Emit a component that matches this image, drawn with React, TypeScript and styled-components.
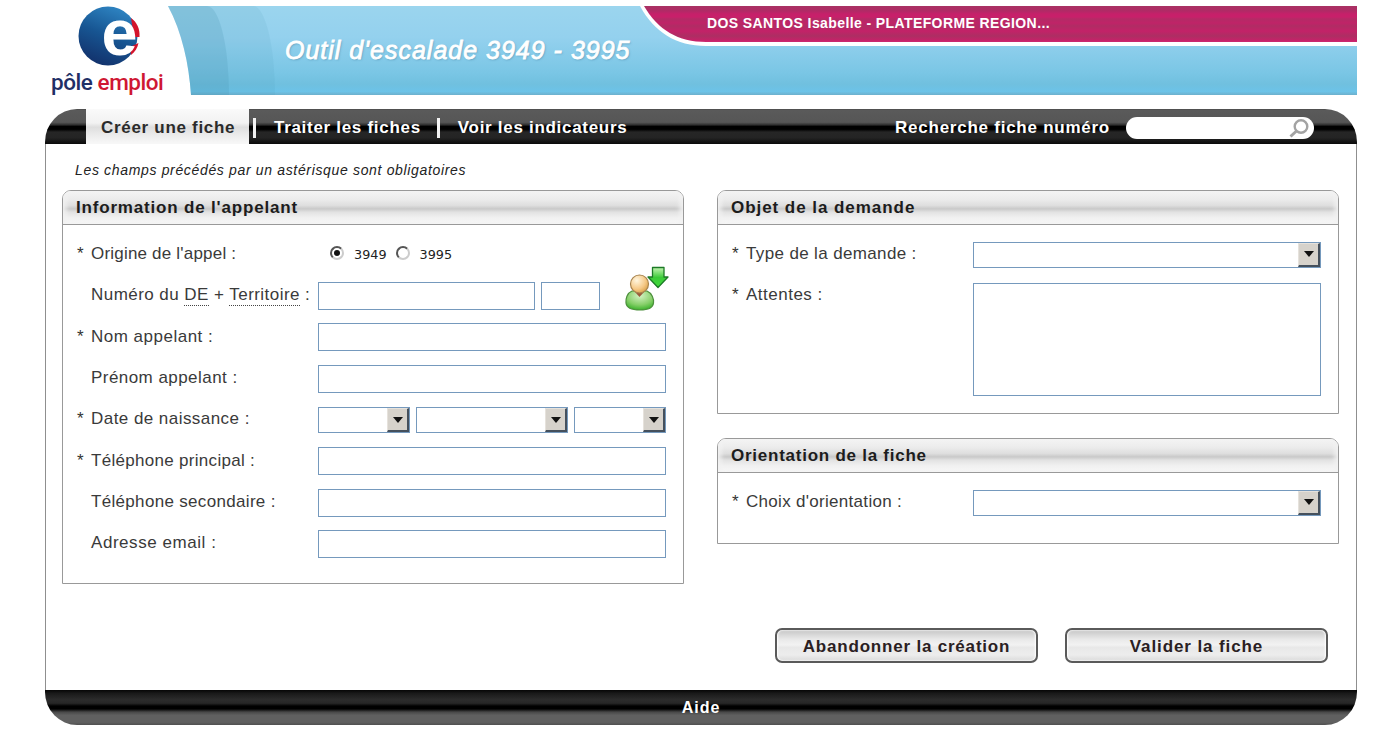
import React from 'react';
import styled, { createGlobalStyle } from 'styled-components';

const GlobalStyle = createGlobalStyle`
  *, *::before, *::after { box-sizing: border-box; }
  body {
    margin: 0;
    background: #fff;
    color: #333;
    font-family: 'Liberation Sans', Arial, sans-serif;
    font-size: 17px;
  }
`;

const Page = styled.div`
  width: 1393px;
  height: 754px;
  padding: 6px 36px 0 45px;
  display: flex;
  flex-direction: column;
  overflow: hidden;
`;

const Text = styled.span<{ $ls?: number }>`
  white-space: nowrap;
  letter-spacing: ${(p) => p.$ls ?? 0}px;
`;

/* ---------- Header ---------- */

const Header = styled.header`
  display: flex;
  height: 103px;
  flex: none;
`;

const Brand = styled.div`
  width: 123px;
  padding-left: 6px;
  flex: none;
`;

const BrandMark = styled.svg`
  display: block;
  width: 66px;
  height: 60px;
  margin-left: 26px;
  overflow: visible;
`;

const BrandName = styled.div`
  font-family: Roboto, sans-serif;
  font-size: 22.5px;
  font-weight: 500;
  line-height: 28px;
  margin-top: 2px;
  letter-spacing: -0.45px;
  white-space: nowrap;
  color: #1f2f66;
  em { font-style: normal; color: #cf1733; }
`;

const Banner = styled.div`
  position: relative;
  display: flex;
  flex: 1;
  height: 89px;
  justify-content: space-between;
  background: linear-gradient(#9bd5ee 0%, #94d1ee 35%, #7ac6e5 75%, #70c0df 88%, #6cc3e8 96%, #6db0cc 100%);
  clip-path: path('M0 0 C14 26 21 58 23 89 H1189 V0 Z');
`;

const BannerShade = styled.div<{ $right: number; $alpha: number }>`
  position: absolute;
  left: 0;
  top: 0;
  width: ${(p) => p.$right}px;
  height: 89px;
  border-top-right-radius: 22px 89px;
  background: rgba(70, 145, 175, ${(p) => p.$alpha});
`;

const AppTitle = styled.h1`
  position: relative;
  margin: 29px 0 0 117px;
  font-size: 25px;
  line-height: 30px;
  font-weight: 400;
  font-style: italic;
  letter-spacing: 1px;
  color: #fff;
  -webkit-text-stroke: 0.8px #fff;
  text-shadow: 1px 1px 2px rgba(70, 130, 160, 0.6);
  white-space: nowrap;
`;

const UserEdge = styled.div`
  width: 717px;
  height: 40px;
  padding-left: 4px;
  background: #fff;
  clip-path: path('M0 0 C14 26 36 40 66 40 H717 V0 Z');
`;

const UserBar = styled.div`
  height: 36px;
  padding-left: 63px;
  line-height: 35px;
  font-size: 14px;
  font-weight: 700;
  color: #fff;
  background: linear-gradient(#a83263 0, #b12a66 5px, #c6206a 8px, #c8206a 11px, #b32b66 13px, #c02368 17px, #b02c64 20px, #c32268 25px, #ad2e63 30px, #c42268 34px, #cc2a70 36px);
  clip-path: path('M0 0 C14 24 34 36 62 36 H713 V0 Z');
`;

/* ---------- Menu ---------- */

const MenuBar = styled.nav`
  display: flex;
  align-items: center;
  height: 35px;
  flex: none;
  padding-left: 41px;
  border-radius: 32px 32px 0 0 / 33px 33px 0 0;
  background: linear-gradient(#4a4a4a 0, #5a5a5a 4%, #565656 38%, #303030 45%, #000 50%, #000 58%, #262626 66%, #242424 82%, #0a0a0a 100%);
  color: #fff;
  font-weight: 700;
`;

const ActiveTab = styled.div`
  width: 163px;
  height: 35px;
  padding-left: 15px;
  line-height: 37px;
  color: #2b2b2b;
  background: linear-gradient(#fafafa 0, #f2f2f2 40%, #dedede 52%, #ececec 75%, #f8f8f8 100%);
`;

const Divider = styled.i<{ $left: number; $right: number }>`
  width: 3px;
  height: 20px;
  margin: 2px ${(p) => p.$right}px 0 ${(p) => p.$left}px;
  background: #f2f2f2;
`;

const MenuLink = styled.div`
  line-height: 35px;
  padding-top: 2px;
`;

const SearchLabel = styled(MenuLink)`
  margin-left: auto;
  margin-right: 16px;
`;

const SearchBox = styled.div`
  display: flex;
  justify-content: flex-end;
  align-items: center;
  width: 188px;
  height: 22px;
  margin-right: 43px;
  margin-top: 3px;
  padding-right: 4px;
  border-radius: 11px;
  background: #fff;
  svg { display: block; }
`;

/* ---------- Body ---------- */

const Body = styled.main`
  height: 546px;
  flex: none;
  padding: 0 17px 0 16px;
  border-left: 1px solid #8f8f8f;
  border-right: 1px solid #8f8f8f;
`;

const Hint = styled.p`
  margin: 0;
  height: 46px;
  padding: 16px 0 0 13px;
  font-size: 14px;
  line-height: 20px;
  font-style: italic;
  color: #222;
`;

const Columns = styled.div`
  display: flex;
  justify-content: space-between;
  height: 394px;
`;

const Column = styled.div`
  width: 622px;
`;

const Panel = styled.section<{ $h: number; $mt?: number }>`
  height: ${(p) => p.$h}px;
  margin-top: ${(p) => p.$mt ?? 0}px;
  border: 1px solid #999;
  border-radius: 9px 9px 0 0;
  overflow: hidden;
`;

const PanelTitle = styled.h2`
  margin: 0;
  height: 34px;
  padding-left: 13px;
  line-height: 34px;
  font-size: 17px;
  font-weight: 700;
  color: #1c1c1c;
  border-bottom: 1px solid #999;
  background: linear-gradient(#f4f4f4 0, #ececec 25%, #dedede 44%, #c9c9c9 54%, #e2e2e2 64%, #f0f0f0 80%, #f7f7f7 100%);
  box-shadow: inset 5px 0 5px -2px #f2f2f2, inset -5px 0 5px -2px #f2f2f2;
`;

const Rows = styled.div`
  padding: 8px 17px 0 14px;
`;

const Row = styled.div<{ $h?: number }>`
  display: flex;
  height: ${(p) => p.$h ?? 41.35}px;
`;

const Star = styled.span`
  width: 14px;
  flex: none;
  line-height: 42px;
  color: #333;
`;

const Label = styled.label`
  width: 227px;
  flex: none;
  line-height: 41px;
  color: #3a3a3a;
  abbr {
    text-decoration: none;
    border-bottom: 1px dotted #444;
    padding-bottom: 1px;
  }
`;

const Fields = styled.div<{ $gap?: number }>`
  display: flex;
  flex: 1;
  align-items: center;
  gap: ${(p) => p.$gap ?? 0}px;
  padding-top: 2px;
`;

const Input = styled.input<{ $w: number }>`
  width: ${(p) => p.$w}px;
  flex: none;
  height: 28px;
  margin: 0;
  padding: 0 4px;
  border: 1px solid #7599bd;
  border-radius: 0;
  outline: none;
  background: #fff;
`;

const Area = styled.textarea`
  width: 348px;
  height: 113px;
  margin-top: 4px;
  border: 1px solid #7599bd;
  outline: none;
  resize: none;
`;

const SelectBox = styled.div<{ $w: number }>`
  display: flex;
  justify-content: flex-end;
  width: ${(p) => p.$w}px;
  height: 26px;
  border: 1px solid #7599bd;
  background: #fff;
`;

const SelectArrow = styled.span`
  display: flex;
  align-items: center;
  justify-content: center;
  width: 22px;
  height: 24px;
  border: solid;
  border-width: 1px 2px 2px 1px;
  border-color: #e6e2dc #45505c #45505c #e6e2dc;
  background: #d6d2cb;
  &::after {
    content: '';
    border: 5px solid transparent;
    border-top: 6px solid #111;
    border-bottom: 0;
  }
`;

const Choice = styled.span`
  display: flex;
  align-items: center;
  font-family: 'DejaVu Sans', sans-serif;
  font-size: 12.8px;
  color: #222;
`;

const ChoiceGroup = styled.div`
  display: flex;
  gap: 9px;
  padding-left: 12px;
`;

const RadioDot = styled.i<{ $on?: boolean }>`
  display: flex;
  align-items: center;
  justify-content: center;
  width: 14px;
  height: 14px;
  margin-right: 10px;
  margin-top: -3px;
  border: 2px solid;
  border-color: #555 #ccc #ccc #555;
  border-radius: 50%;
  background: #fff;
  &::after {
    content: '';
    width: 6px;
    height: 6px;
    border-radius: 50%;
    background: ${(p) => (p.$on ? '#111' : 'transparent')};
  }
`;

const PersonIcon = styled.svg`
  display: block;
  flex: none;
  width: 46px;
  height: 46px;
  margin: -16px 0 0 16px;
  overflow: visible;
`;

const Actions = styled.div`
  display: flex;
  justify-content: flex-end;
  gap: 27px;
  padding: 44px 11px 0 0;
`;

const Button = styled.button`
  width: 263px;
  height: 35px;
  padding: 2px 0 0;
  border: 2px solid #5a5a5a;
  border-radius: 7px;
  font-family: inherit;
  font-size: 17px;
  font-weight: 700;
  color: #2a2022;
  background: linear-gradient(#c6c6c6 0, #d4d4d4 12%, #e9e9e9 30%, #f2f2f2 48%, #e8e8e8 56%, #ededed 80%, #dadada 100%);
  box-shadow: inset 1px 0 2px #fff, inset -1px 0 2px #fff;
`;

const Footer = styled.footer`
  height: 35px;
  flex: none;
  line-height: 36px;
  text-align: center;
  font-size: 16px;
  font-weight: 700;
  color: #fff;
  border-radius: 0 0 32px 32px / 0 0 33px 33px;
  background: linear-gradient(#060606 0, #1a1a1a 10%, #2c2c2c 28%, #262626 38%, #000 46%, #000 54%, #484848 63%, #606060 72%, #606060 92%, #505050 100%);
`;

function Logo() {
  return (
    <BrandMark viewBox="77 5 66 60">
      <defs>
        <linearGradient id="globe" x1="0.7" y1="0" x2="0.3" y2="1">
          <stop offset="0" stopColor="#2f86c4" />
          <stop offset="0.5" stopColor="#175592" />
          <stop offset="1" stopColor="#12306a" />
        </linearGradient>
      </defs>
      <circle cx="108" cy="35" r="29.5" fill="url(#globe)" />
      <path d="M131 17 C137 21 140 28 139.500 36 H134 Z" fill="#d3142c" />
      <path d="M138.500 42 C137.500 47 135 51 131 54 L130 46 Z" fill="#d3142c" />
      <text
        x="101.500" y="54" fill="#fff" fontFamily="Liberation Sans, Arial, sans-serif"
        fontSize="64" fontWeight="700" textLength="36" lengthAdjust="spacingAndGlyphs"
      >e</text>
    </BrandMark>
  );
}

function ImportCaller() {
  return (
    <PersonIcon viewBox="622 264 46 46">
      <defs>
        <radialGradient id="head" cx="0.35" cy="0.3" r="0.8">
          <stop offset="0" stopColor="#fff6df" />
          <stop offset="0.6" stopColor="#f6c987" />
          <stop offset="1" stopColor="#d59a3f" />
        </radialGradient>
        <radialGradient id="torso" cx="0.5" cy="0.25" r="0.8">
          <stop offset="0" stopColor="#d5f2c4" />
          <stop offset="0.6" stopColor="#86cf69" />
          <stop offset="1" stopColor="#2fae22" />
        </radialGradient>
        <linearGradient id="arrow" x1="0" y1="0" x2="0" y2="1">
          <stop offset="0" stopColor="#c6f5b4" />
          <stop offset="0.5" stopColor="#3ccb38" />
          <stop offset="1" stopColor="#3fdc3c" />
        </linearGradient>
      </defs>
      <path d="M632 290 C627 292 625.500 298 626 302 C626.500 307 632 309 640 309 C648 309 653 307 653.500 302 C654 298 652 292 647 290 Z" fill="url(#torso)" stroke="#4d8f3d" strokeWidth="1.200" />
      <path d="M635 291 L639.500 296 L644 291 Z" fill="#9a5a3c" />
      <circle cx="639.500" cy="283" r="9" fill="url(#head)" stroke="#a8844f" strokeWidth="1.200" />
      <path d="M652.500 266.500 H664 V276 H668 L658 286.500 L648 276 H652.500 Z" fill="url(#arrow)" stroke="#1c7a26" strokeWidth="1.300" strokeLinejoin="round" />
    </PersonIcon>
  );
}

function Select({ w }: { w: number }) {
  return (
    <SelectBox $w={w}>
      <SelectArrow />
    </SelectBox>
  );
}

type FieldRowProps = {
  label: React.ReactNode;
  required?: boolean;
  ls?: number;
  gap?: number;
  height?: number;
  children: React.ReactNode;
};

function FieldRow({ label, required, ls = 0.45, gap, height, children }: FieldRowProps) {
  return (
    <Row $h={height}>
      <Star>{required ? '*' : ''}</Star>
      <Label>
        <Text $ls={ls}>{label}</Text>
      </Label>
      <Fields $gap={gap}>{children}</Fields>
    </Row>
  );
}

export default function App() {
  return (
    <>
      <GlobalStyle />
      <Page>
        <Header>
          <Brand>
            <Logo />
            <BrandName>pôle <em>emploi</em></BrandName>
          </Brand>
          <Banner>
            <BannerShade $right={107} $alpha={0.1} />
            <BannerShade $right={61} $alpha={0.2} />
            <AppTitle>Outil d'escalade 3949 - 3995</AppTitle>
            <UserEdge>
              <UserBar>
                <Text $ls={0.4}>DOS SANTOS Isabelle - PLATEFORME REGION...</Text>
              </UserBar>
            </UserEdge>
          </Banner>
        </Header>

        <MenuBar>
          <ActiveTab><Text $ls={0.7}>Créer une fiche</Text></ActiveTab>
          <Divider $left={4} $right={18} />
          <MenuLink><Text $ls={0.7}>Traiter les fiches</Text></MenuLink>
          <Divider $left={16} $right={18} />
          <MenuLink><Text $ls={0.7}>Voir les indicateurs</Text></MenuLink>
          <SearchLabel><Text $ls={0.75}>Recherche fiche numéro</Text></SearchLabel>
          <SearchBox>
            <svg width="22" height="20" viewBox="0 0 22 20" fill="none" stroke="#a3a3a3">
              <circle cx="13" cy="8.500" r="6.300" strokeWidth="2.400" />
              <path d="M8.500 13 L2.500 18.500" strokeWidth="3" />
            </svg>
          </SearchBox>
        </MenuBar>

        <Body>
          <Hint><Text $ls={0.66}>Les champs précédés par un astérisque sont obligatoires</Text></Hint>
          <Columns>
            <Column>
              <Panel $h={394}>
                <PanelTitle><Text $ls={0.82}>Information de l'appelant</Text></PanelTitle>
                <Rows>
                  <FieldRow label="Origine de l'appel :" required ls={0.2}>
                    <ChoiceGroup>
                      <Choice><RadioDot $on />3949</Choice>
                      <Choice><RadioDot />3995</Choice>
                    </ChoiceGroup>
                  </FieldRow>
                  <FieldRow label={<>Numéro du <abbr>DE</abbr> + <abbr>Territoire</abbr> :</>} gap={6}>
                    <Input $w={217} aria-label="Numéro du DE" />
                    <Input $w={59} aria-label="Territoire" />
                    <ImportCaller />
                  </FieldRow>
                  <FieldRow label="Nom appelant :" required ls={0.5}><Input $w={348} /></FieldRow>
                  <FieldRow label="Prénom appelant :"><Input $w={348} /></FieldRow>
                  <FieldRow label="Date de naissance :" required gap={6}>
                    <Select w={92} />
                    <Select w={152} />
                    <Select w={92} />
                  </FieldRow>
                  <FieldRow label="Téléphone principal :" required ls={0.3}><Input $w={348} /></FieldRow>
                  <FieldRow label="Téléphone secondaire :" ls={0.32}><Input $w={348} /></FieldRow>
                  <FieldRow label="Adresse email :" ls={0.55}><Input $w={348} /></FieldRow>
                </Rows>
              </Panel>
            </Column>
            <Column>
              <Panel $h={224}>
                <PanelTitle><Text $ls={0.95}>Objet de la demande</Text></PanelTitle>
                <Rows>
                  <FieldRow label="Type de la demande :" required ls={0.36}><Select w={348} /></FieldRow>
                  <FieldRow label="Attentes :" required ls={0.5} height={125}><Area /></FieldRow>
                </Rows>
              </Panel>
              <Panel $h={106} $mt={24}>
                <PanelTitle><Text $ls={0.75}>Orientation de la fiche</Text></PanelTitle>
                <Rows>
                  <FieldRow label="Choix d'orientation :" required ls={0.3}><Select w={348} /></FieldRow>
                </Rows>
              </Panel>
            </Column>
          </Columns>
          <Actions>
            <Button><Text $ls={0.8}>Abandonner la création</Text></Button>
            <Button><Text $ls={0.9}>Valider la fiche</Text></Button>
          </Actions>
        </Body>
        <Footer><Text $ls={1}>Aide</Text></Footer>
      </Page>
    </>
  );
}
